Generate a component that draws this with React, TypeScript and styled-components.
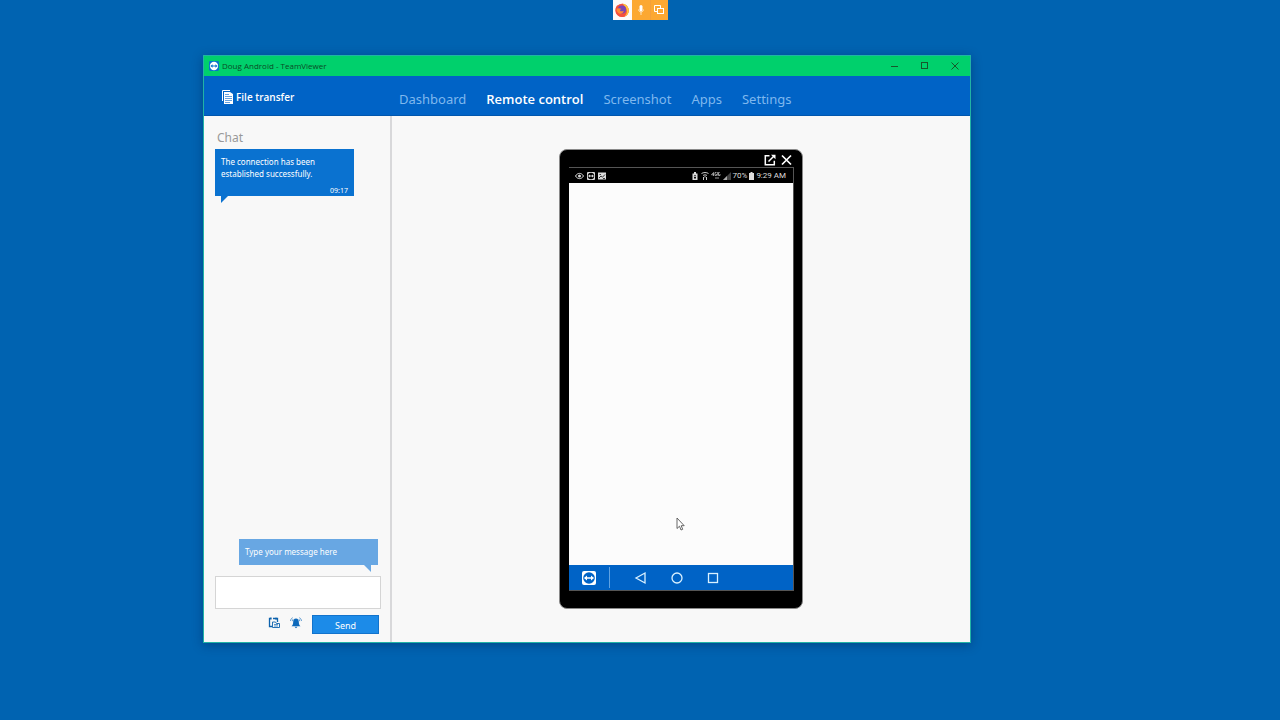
import React from 'react';
import styled, { createGlobalStyle } from 'styled-components';

const GlobalStyle = createGlobalStyle`
  *, *::before, *::after { box-sizing: border-box; }
  body { margin: 0; background: #0063b1; font-family: "Noto Sans", "Open Sans", sans-serif; }
  button { font-family: inherit; border: 0; padding: 0; background: none; cursor: pointer; }
  svg { display: block; flex: none; }
`;

const Desktop = styled.div`
  position: relative;
  min-height: 100vh;
  background: #0063b1;
  overflow: hidden;
`;

const ShareBar = styled.div`
  display: grid;
  grid-template-columns: 19px 18px 18px;
  width: 55px;
  height: 20px;
  margin: 0 auto;
  background: #fca832;
`;

const ShareButton = styled.button<{ $white?: boolean; $divided?: boolean }>`
  display: grid;
  place-items: center;
  background: ${p => (p.$white ? '#fdfafa' : 'transparent')};
  border-left: ${p => (p.$divided ? '1px solid #f3a03c' : '0')};
`;

const AppWindow = styled.section`
  position: absolute;
  top: 55px;
  left: 203px;
  width: 60%;
  height: calc(100vh - 132px);
  min-height: 540px;
  display: flex;
  flex-direction: column;
  border: 1px solid #21b3a5;
  background: #f8f8f8;
  box-shadow: 0 2px 10px rgba(0, 20, 60, 0.35);
`;

const TitleBar = styled.header`
  display: flex;
  align-items: center;
  height: 20px;
  padding-left: 5px;
  background: #00d06c;
`;

const Title = styled.h1`
  flex: 1;
  margin: 0 0 0 3px;
  font-family: "Open Sans", sans-serif;
  font-size: 8px;
  line-height: 12px;
  font-weight: 400;
  color: #0b4a26;
`;

const WindowButton = styled.button`
  width: 30px;
  height: 20px;
  display: grid;
  place-items: center;
`;

const Toolbar = styled.div`
  display: flex;
  height: 40px;
  background: #0063c6;
  border-bottom: 1px solid #0056ad;
`;

const FileTransfer = styled.button`
  display: flex;
  align-items: center;
  gap: 3px;
  width: 188px;
  padding: 2px 0 0 18px;
  color: #fff;
  font-family: "Open Sans", sans-serif;
  font-size: 10px;
  font-weight: 600;
`;

const Nav = styled.nav`
  display: flex;
  align-items: center;
  gap: 20px;
  padding: 6px 0 0 7px;
`;

const NavLink = styled.a<{ $active?: boolean }>`
  font-family: ${p => (p.$active ? '"Open Sans", sans-serif' : 'inherit')};
  font-size: 13px;
  line-height: 20px;
  text-decoration: none;
  white-space: nowrap;
  font-weight: ${p => (p.$active ? 600 : 400)};
  color: ${p => (p.$active ? '#ffffff' : '#7fb8ee')};
`;

const Body = styled.div`
  flex: 1;
  display: flex;
  min-height: 0;
`;

const ChatPanel = styled.aside`
  width: 188px;
  display: flex;
  flex-direction: column;
  padding: 14px 9px 8px 11px;
  border-right: 2px solid #d8d8da;
`;

const ChatTitle = styled.h2`
  margin: 0 0 3px 2px;
  font-size: 12px;
  line-height: 16px;
  font-weight: 400;
  color: #999;
`;

const Bubble = styled.div`
  position: relative;
  width: 139px;
  height: 47px;
  padding: 7px 6px 0;
  background: #0a72d0;
  color: #fff;
  font-size: 8px;
  line-height: 12px;
  &::after {
    content: '';
    position: absolute;
    top: 100%;
    left: 6px;
    border-top: 7px solid #0a72d0;
    border-right: 7px solid transparent;
  }
`;

const BubbleText = styled.p`
  margin: 0;
`;

const BubbleTime = styled.time`
  display: block;
  margin-top: 5px;
  font-size: 7px;
  text-align: right;
`;

const HintBubble = styled.label`
  position: relative;
  align-self: flex-end;
  width: 139px;
  margin: auto 3px 11px 0;
  padding: 7px 6px;
  background: #68a7e3;
  color: #fff;
  font-size: 8px;
  line-height: 12px;
  &::after {
    content: '';
    position: absolute;
    top: 100%;
    right: 7px;
    border-top: 7px solid #68a7e3;
    border-left: 7px solid transparent;
  }
`;

const MessageBox = styled.textarea`
  width: 100%;
  height: 33px;
  padding: 4px;
  border: 1px solid #d5d5d5;
  border-radius: 0;
  background: #fff;
  resize: none;
  outline: none;
  font: 8px/12px "Noto Sans", sans-serif;
`;

const ChatActions = styled.div`
  display: flex;
  justify-content: flex-end;
  align-items: center;
  gap: 10px;
  margin: 6px 2px 0 0;
`;

const IconButton = styled.button`
  height: 18px;
  padding-bottom: 4px;
`;

const SendButton = styled.button`
  width: 67px;
  height: 19px;
  padding-top: 1px;
  background: #1c8be8;
  border: 1px solid #1273cc;
  color: #fff;
  font-size: 9px;
  line-height: 18px;
`;

const Main = styled.main`
  flex: 1;
  display: grid;
  place-items: center;
`;

const Phone = styled.div`
  display: flex;
  flex-direction: column;
  width: 244px;
  height: 460px;
  padding: 0 8px 17px 9px;
  background: #000;
  border: 1px solid #8a8a8a;
  border-radius: 8px;
`;

const PhoneTop = styled.div`
  display: flex;
  justify-content: flex-end;
  align-items: center;
  gap: 5px;
  height: 17px;
  padding: 3px 2px 0 0;
`;

const Screen = styled.div`
  flex: 1;
  display: flex;
  flex-direction: column;
  border: 1px solid #555;
  border-width: 1px 1px 1px 0;
  background: #fcfcfc;
`;

const StatusBar = styled.div`
  display: flex;
  align-items: center;
  justify-content: space-between;
  height: 15px;
  padding: 1px 7px 0 6px;
  background: #000;
  color: #ddd;
  font: 8px/14px Roboto, sans-serif;
`;

const StatusGroup = styled.div<{ $gap: number }>`
  display: flex;
  align-items: center;
  gap: ${p => p.$gap}px;
`;

const Canvas = styled.div`
  position: relative;
  flex: 1;
`;

const Pointer = styled.svg`
  position: absolute;
  left: 107px;
  bottom: 34px;
`;

const PhoneNav = styled.div`
  display: flex;
  align-items: center;
  height: 25px;
  background: #0063c6;
`;

const HomeButton = styled.button`
  width: 41px;
  height: 21px;
  padding-left: 13px;
  border-right: 1px solid #5fa2e2;
`;

const PhoneKeys = styled.div`
  display: flex;
  gap: 22px;
  padding-left: 24px;
`;

const TeamViewerMark = ({ size, badge }: { size: number; badge: string }) => (
  <svg width={size} height={size} viewBox="0 0 14 14">
    <rect width="14" height="14" rx="2" fill={badge} />
    <circle cx="7" cy="7" r="5.8" fill={badge === '#fff' ? '#0063c6' : '#fff'} />
    <path
      d="M1.900 7 5 4.500v1.700h4V4.500L12.100 7 9 9.500V7.800H5v1.700z"
      fill={badge === '#fff' ? '#fff' : '#0874c9'}
    />
  </svg>
);

const FirefoxIcon = () => (
  <svg width="16" height="16" viewBox="0 0 16 16">
    <circle cx="8" cy="8.4" r="6.6" fill="#f4503d" />
    <path d="M2 5.200C1 8.600 1.800 12.600 5 14.200c4 2 8.600.200 9.500-4C15.200 7 13.800 3.800 10.800 2.200c1.500 2 1.800 3.200 1.800 5-1-2.700-2.500-3-3.800-5.700-2 1.500-2.300 3-2.300 3.800L4 4.800 3.300 3z" fill="#f4503d" />
    <path d="M8.800 1.500c1.300 2.700 2.800 3 3.800 5.700.8 3.300-.2 5.300-2.200 7.300 1.600-.5 3-1.600 3.800-3.300 1.600-3.100.3-7-3.400-9z" fill="#ffc43a" />
    <circle cx="8" cy="7.600" r="4" fill="#7a45b5" />
    <path d="M2.600 6.800c1.600-1 3.600-.6 5 .2-1 .2-1.600.8-1.600 1.500.5 1 2.300 1.200 3.800.3-.3 2-2.300 3.300-4 2.900C3.600 11.200 2.300 9 2.600 6.800z" fill="#ff8a35" />
  </svg>
);

export default function App() {
  return (
    <>
      <GlobalStyle />
      <Desktop>
        <ShareBar>
          <ShareButton $white aria-label="Firefox"><FirefoxIcon /></ShareButton>
          <ShareButton aria-label="Microphone">
            <svg width="10" height="12" viewBox="0 0 10 12">
              <rect x="3.500" y="1" width="3" height="6.500" rx="1.500" fill="#fff" />
              <path d="M2.500 5.500c0 3.300 5 3.300 5 0M5 8v3" stroke="#fde3b8" fill="none" />
            </svg>
          </ShareButton>
          <ShareButton $divided aria-label="Switch windows">
            <svg width="12" height="12" viewBox="0 0 12 12" fill="none" stroke="#fff">
              <path d="M4 7.500H1.500v-6h6V4" />
              <rect x="4.500" y="4.500" width="6" height="5" />
            </svg>
          </ShareButton>
        </ShareBar>

        <AppWindow>
          <TitleBar>
            <TeamViewerMark size={10} badge="#0874c9" />
            <Title>Doug Android - TeamViewer</Title>
            <WindowButton aria-label="Minimize">
              <svg width="8" height="8"><path d="M0 4.500h7" stroke="#17572b" /></svg>
            </WindowButton>
            <WindowButton aria-label="Maximize">
              <svg width="8" height="8"><rect x=".5" y=".5" width="6" height="6" fill="none" stroke="#17572b" /></svg>
            </WindowButton>
            <WindowButton aria-label="Close">
              <svg width="8" height="8"><path d="M.5.500l7 7M7.500.500l-7 7" stroke="#17572b" /></svg>
            </WindowButton>
          </TitleBar>

          <Toolbar>
            <FileTransfer>
              <svg width="11" height="14" viewBox="0 0 11 14">
                <path d="M.5 11V.5H8" stroke="#fff" fill="none" />
                <path d="M2 2h6l3 2v10H2z" fill="#fff" />
                <path d="M3 4.500h4M3 6.500h7M3 8.500h7M3 10.500h7M3 12.500h5" stroke="#3f89d6" strokeWidth=".8" />
              </svg>
              File transfer
            </FileTransfer>
            <Nav>
              <NavLink href="#dashboard">Dashboard</NavLink>
              <NavLink href="#remote" $active>Remote control</NavLink>
              <NavLink href="#screenshot">Screenshot</NavLink>
              <NavLink href="#apps">Apps</NavLink>
              <NavLink href="#settings">Settings</NavLink>
            </Nav>
          </Toolbar>

          <Body>
            <ChatPanel>
              <ChatTitle>Chat</ChatTitle>
              <Bubble>
                <BubbleText>The connection has been<br />established successfully.</BubbleText>
                <BubbleTime>09:17</BubbleTime>
              </Bubble>
              <HintBubble htmlFor="message">Type your message here</HintBubble>
              <MessageBox id="message" />
              <ChatActions>
                <IconButton aria-label="Send file">
                  <svg width="12" height="12" viewBox="0 0 12 12" fill="none" stroke="#0d62ad">
                    <path d="M3 1.500H1.500v8H4" strokeWidth="1.300" />
                    <path d="M3 2.500V.500M8 .5v2.200M5 1.500h4.500V5" strokeWidth="1.300" />
                    <path d="M4.500 10.500v-5.500h3l1 1.500h3v4z" fill="#f8f8f8" strokeWidth=".9" />
                    <path d="M6 7.500h4M6 9h4" stroke="#5a94c8" />
                  </svg>
                </IconButton>
                <IconButton aria-label="Nudge">
                  <svg width="12" height="12" viewBox="0 0 12 12">
                    <path d="M6 1.500c2 0 2.800 1.300 2.800 3.200C8.800 7 9.300 8 10.500 9.300h-9C2.700 8 3.200 7 3.200 4.700 3.200 2.800 4 1.500 6 1.500z" fill="#0d69bb" />
                    <path d="M4.500 9.800h3L6 11.300z" fill="#0d69bb" />
                    <path d="M.5 4C.7 2.500 1.300 1.300 2.700.7M11.500 4C11.300 2.500 10.700 1.300 9.300.7M2.300 4.200c0-1 .3-1.500.8-2M9.700 4.200c0-1-.3-1.500-.8-2" fill="none" stroke="#3f87c6" strokeWidth=".8" />
                  </svg>
                </IconButton>
                <SendButton>Send</SendButton>
              </ChatActions>
            </ChatPanel>

            <Main>
              <Phone>
                <PhoneTop>
                  <svg width="12" height="12" viewBox="0 0 12 12" fill="none" stroke="#fff" strokeWidth="1.500">
                    <path d="M5.500 1.700H1.300v9h9V6.800M4.500 7.500L10 2" />
                    <path d="M7 .7h4.500v4.500z" fill="#fff" stroke="none" />
                  </svg>
                  <svg width="11" height="12" viewBox="0 0 11 12">
                    <path d="M1 1.500l9 9M10 1.500l-9 9" stroke="#fff" strokeWidth="1.700" />
                  </svg>
                </PhoneTop>
                <Screen>
                  <StatusBar>
                    <StatusGroup $gap={3}>
                      <svg width="9" height="8" viewBox="0 0 9 8">
                        <path d="M.5 4c2-3.500 6-3.500 8 0-2 3.500-6 3.500-8 0z" fill="none" stroke="#ddd" />
                        <circle cx="4.500" cy="4" r="1.500" fill="#ddd" />
                      </svg>
                      <svg width="8" height="8" viewBox="0 0 8 8">
                        <rect width="8" height="8" rx="1" fill="#ddd" />
                        <circle cx="4" cy="4" r="3.200" fill="#000" />
                        <path d="M1 4l2-1.500v1h2v-1L7 4 5 5.500v-1H3v1z" fill="#ddd" />
                      </svg>
                      <svg width="8" height="8" viewBox="0 0 8 8">
                        <rect y=".5" width="8" height="7" fill="#ddd" />
                        <path d="M1 6l2-2 1.500 1.200L7 2.500M5 6.500h2M1.500 2.500H3" stroke="#111" strokeWidth=".8" fill="none" />
                      </svg>
                    </StatusGroup>
                    <StatusGroup $gap={2}>
                      <svg width="8" height="8" viewBox="0 0 8 8">
                        <path d="M1.500 1.500h1.500V0h2v1.500h1.500V8h-5z" fill="#ddd" />
                        <path d="M4 2.700L2.700 4.300h2.600zM3 5h2v1.500H3z" fill="#111" />
                      </svg>
                      <svg width="8" height="8" viewBox="0 0 8 8" fill="none" stroke="#ccc">
                        <path d="M.5 1.500c2-1.300 5-1.300 7 0M2 3.500c1-.8 3-.8 4 0M4 4v1.500M2.500 5v3M5.500 5v3" />
                      </svg>
                      <svg width="10" height="8" viewBox="0 0 10 8" fill="none" stroke="#bbb" strokeWidth=".8">
                        <path d="M2.500 4V.5L.5 2.800H3M5.500.5H4v3h1.500V2M6.700 0v3.500M8.700.5H7.500v3H9V2M4 6h4" />
                      </svg>
                      <svg width="8" height="8" viewBox="0 0 8 8">
                        <path d="M0 8l8-8v8z" fill="#444" />
                        <path d="M0 8l4-4v4z" fill="#aaa" />
                      </svg>
                      <span>70%</span>
                      <svg width="5" height="8" viewBox="0 0 5 8">
                        <path d="M0 1h1.500V0h2v1H5v7H0z" fill="#ddd" />
                      </svg>
                      <span>9:29 AM</span>
                    </StatusGroup>
                  </StatusBar>
                  <Canvas>
                    <Pointer width="9" height="14" viewBox="0 0 9 14">
                      <path d="M1 1v10.500l2.500-2.300L5 13l1.700-.7-1.500-3.600h3z" fill="#fff" stroke="#555" strokeWidth=".9" />
                    </Pointer>
                  </Canvas>
                  <PhoneNav>
                    <HomeButton aria-label="TeamViewer"><TeamViewerMark size={14} badge="#fff" /></HomeButton>
                    <PhoneKeys>
                      <button aria-label="Back">
                        <svg width="14" height="14"><path d="M11 2v10L2 7z" fill="none" stroke="#d9f1ff" strokeWidth="1.300" /></svg>
                      </button>
                      <button aria-label="Home">
                        <svg width="14" height="14"><circle cx="7" cy="7" r="5" fill="none" stroke="#d9f1ff" strokeWidth="1.300" /></svg>
                      </button>
                      <button aria-label="Recent apps">
                        <svg width="14" height="14"><rect x="2.500" y="2.500" width="9" height="9" fill="none" stroke="#d9f1ff" strokeWidth="1.300" /></svg>
                      </button>
                    </PhoneKeys>
                  </PhoneNav>
                </Screen>
              </Phone>
            </Main>
          </Body>
        </AppWindow>
      </Desktop>
    </>
  );
}
